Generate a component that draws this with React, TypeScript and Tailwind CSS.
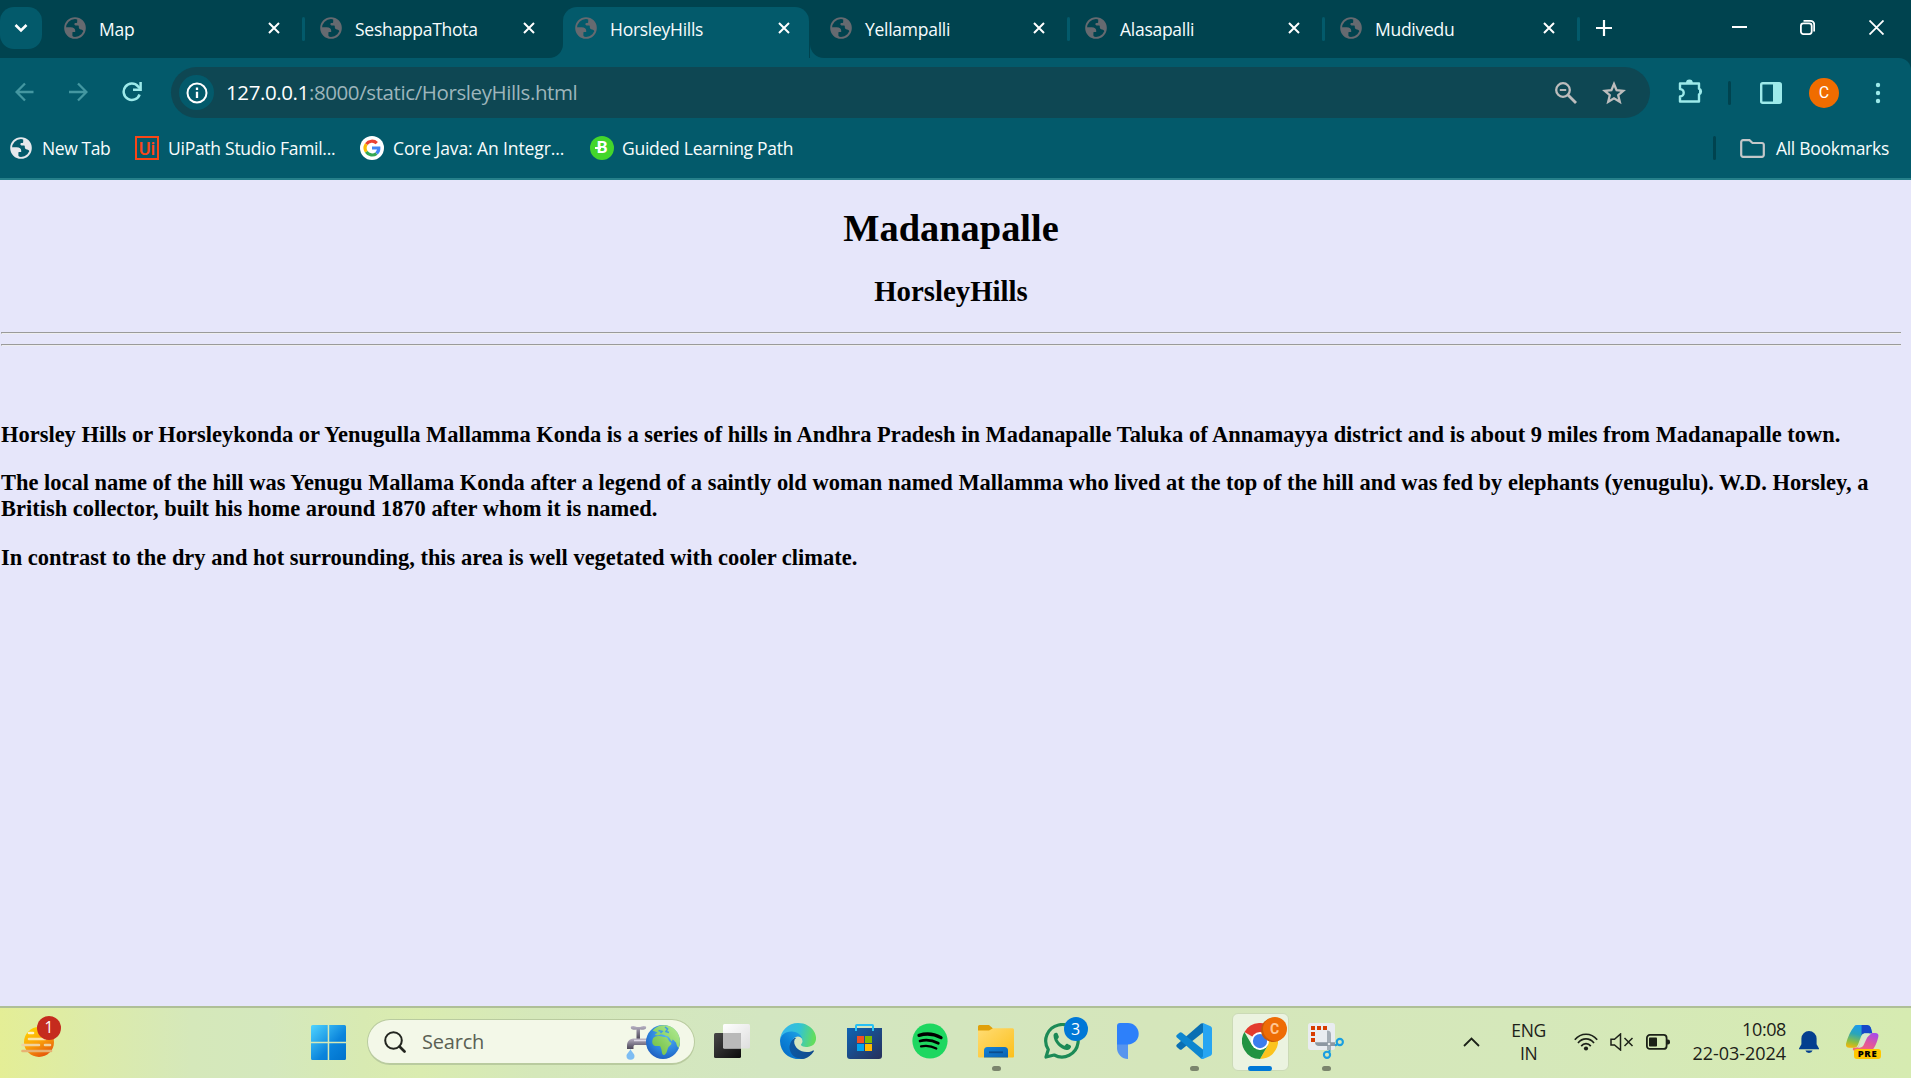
import React from "react";

type IconProps = { className?: string };

const Globe = ({ className = "" }: IconProps) => (
  <svg viewBox="0 0 22 22" className={"size-[22px] shrink-0 " + className}>
    <circle cx="11" cy="11" r="9.9" fill="none" stroke="currentColor" strokeWidth="1.8" />
    <path
      fill="currentColor"
      d="M1.2 10.3H6.6C9.6 10.3 11.2 11.8 11.2 13.6V15H9.2C8.6 15 8.4 15.4 8.4 16V18.2C8.4 19.2 9 19.8 9.8 20.6L7.4 20.2C3.4 18.8 1 15.4 1.2 10.3ZM13.2 1.4C18 2.4 20.9 6.4 20.8 11.2C20.8 12.6 20.4 13.6 19.6 14.6C19.2 13.4 18.4 12.4 17 12.4C15.6 12.4 14.8 11.4 14.8 10.2V9.4C14.8 8.8 14.4 8.4 13.8 8.4H11.6C10.8 8.4 10.4 7.8 10.4 7.2C10.4 6.6 10.8 6 11.6 6H12.2C12.8 6 13.2 5.6 13.2 5Z"
    />
  </svg>
);

const Cross = ({ className = "" }: IconProps) => (
  <svg viewBox="0 0 12 12" className={"shrink-0 " + className}>
    <path d="M1 1l10 10M11 1L1 11" stroke="currentColor" strokeWidth="2" fill="none" />
  </svg>
);

const tabs = [
  { title: "Map", active: false, bar: true },
  { title: "SeshappaThota", active: false, bar: false },
  { title: "HorsleyHills", active: true, bar: false },
  { title: "Yellampalli", active: false, bar: true },
  { title: "Alasapalli", active: false, bar: true },
  { title: "Mudivedu", active: false, bar: true },
];

function Tab({ title, active, bar, first }: { title: string; active: boolean; bar: boolean; first: boolean }) {
  return (
    <div className={"relative flex h-full items-end " + (first ? "w-[256px]" : "w-[255px]")}>
      {active && (
        <>
          <span className="absolute bottom-0 left-[-13px] size-4 bg-[#035a6b]">
            <span className="block size-full rounded-br-[14px] bg-[#00434f]" />
          </span>
          <span className="absolute right-[-11px] bottom-0 size-4 bg-[#035a6b]">
            <span className="block size-full rounded-bl-[14px] bg-[#00434f]" />
          </span>
        </>
      )}
      <div
        className={
          "relative flex h-[51px] items-center pb-[9px] " +
          (active ? "ml-[3px] w-[246px] rounded-t-[14px] bg-[#035a6b] pl-[12px]" : "w-full pl-[15px]")
        }
      >
        <Globe className="text-[#666a70]" />
        <span className="mt-[3px] ml-[13px] flex-1 text-[17.5px] tracking-[-0.27px] text-[#f6fcfd]">{title}</span>
        <Cross className={"size-3 text-white " + (active ? "mr-[19px]" : "mr-[25px]")} />
      </div>
      {bar && <span className="absolute top-[17px] right-0 h-6 w-[3px] rounded-sm bg-[#035a6b]" />}
    </div>
  );
}

function TabStrip() {
  return (
    <div className="flex h-[58px] bg-[#00434f]">
      <div className="mt-[7px] mr-[7px] flex h-[42px] w-[42px] items-center justify-center rounded-[14px] bg-[#035a6b]">
        <svg viewBox="0 0 14 10" className="h-[10px] w-[14px]">
          <path d="M1.5 2L7 7.5L12.500 2" stroke="#fff" strokeWidth="2.6" fill="none" />
        </svg>
      </div>
      {tabs.map((t, i) => (
        <Tab key={t.title} {...t} first={i === 0} />
      ))}
      <svg viewBox="0 0 16 16" className="mt-5 ml-4 size-4">
        <path d="M8 0v16M0 8h16" stroke="#fff" strokeWidth="2.200" />
      </svg>
      <div className="mt-5 ml-auto flex pr-[27px] text-white">
        <svg viewBox="0 0 15 15" className="mr-[53px] size-[15px]">
          <path d="M0 7h15" stroke="currentColor" strokeWidth="2" />
        </svg>
        <svg viewBox="0 0 15 15" className="mr-[54px] size-[15px]" fill="none" stroke="currentColor" strokeWidth="1.8">
          <rect x=".9" y="3.300" width="10.800" height="10.800" rx="2.500" />
          <path d="M3.500 .9h7a3.700 3.700 0 0 1 3.700 3.700v7" />
        </svg>
        <svg viewBox="0 0 15 15" className="size-[15px]">
          <path d="M.5 .5l14 14M14.500 .5l-14 14" stroke="currentColor" strokeWidth="1.800" />
        </svg>
      </div>
    </div>
  );
}

function Toolbar() {
  return (
    <div className="bg-[#00434f]">
      <div className="flex h-[60px] items-center rounded-tr-[12px] bg-[#035a6b] pt-[9px] text-[#9deaea]">
        <div className="flex w-[171px] items-center pb-[1px] pl-[15px]">
          <svg viewBox="0 0 20 20" className="size-5 text-[#4497a1]" fill="none" stroke="currentColor" strokeWidth="2.300">
            <path d="M18.500 10H2M10 1.500L1.600 10L10 18.500" />
          </svg>
          <svg viewBox="0 0 20 20" className="ml-[33px] size-5 text-[#4497a1]" fill="none" stroke="currentColor" strokeWidth="2.300">
            <path d="M1 10h17M10 1.500L18.400 10L10 18.500" />
          </svg>
          <svg viewBox="0 0 20 20" className="ml-[34px] size-5" fill="none" stroke="currentColor" strokeWidth="2.500">
            <path d="M17.600 12.500A8.200 8.200 0 1 1 16 4.300L18 6.500" />
            <path d="M18.600 0v7.800H11" />
          </svg>
        </div>
        <div className="flex h-[51px] w-[1479px] items-center rounded-full bg-[#0e4753] pl-2">
          <div className="flex size-[35px] items-center justify-center rounded-full bg-[#035a6b]">
            <svg viewBox="0 0 22 22" className="size-[22px] text-white" fill="none" stroke="currentColor" strokeWidth="2">
              <circle cx="11" cy="11" r="9.500" />
              <path d="M11 9.800v6.200M11 5.600v2.400" strokeWidth="2.300" />
            </svg>
          </div>
          <span className="ml-[12px] pb-px text-[20.5px] tracking-[-0.4px] text-[#9db5bb]">
            <span className="text-white">127.0.0.1</span>:8000/static/HorsleyHills.html
          </span>
          <svg viewBox="0 0 22 22" className="ml-auto size-[22px]" fill="none" stroke="#bdbdbd">
            <circle cx="8" cy="8" r="6.800" strokeWidth="2.300" />
            <path d="M13 13l8 8" strokeWidth="2.800" />
            <path d="M4.800 8h6.400" strokeWidth="1.900" />
          </svg>
          <svg viewBox="0 0 24 24" className="mr-6 ml-[25px] size-6" fill="none" stroke="#bdbdbd" strokeWidth="2.300">
            <path d="M12 3l2.600 6.200 6.700.6-5.100 4.400 1.600 6.600L12 17.300l-5.800 3.500 1.600-6.600-5.100-4.400 6.700-.6z" />
          </svg>
        </div>
        <svg viewBox="0 0 26 26" className="mb-1 ml-[27px] size-[26px]">
          <path
            d="M3 5.500h19v5.200a3 3 0 0 1 0 5.600v7.200H3v-5a3.400 3.400 0 0 0 0-7.400z"
            fill="none"
            stroke="currentColor"
            strokeWidth="2.400"
            strokeLinejoin="round"
          />
          <path d="M9 5a3.400 3.400 0 0 1 6.800 0zM22 10.200a3.400 3.400 0 0 1 0 6.600z" fill="currentColor" />
        </svg>
        <span className="ml-[25px] h-6 w-[3px] rounded-sm bg-[#00434f]" />
        <svg viewBox="0 0 22 22" className="ml-[29px] size-[22px]">
          <rect x="1.200" y="1.200" width="19.600" height="19.600" rx="1.500" fill="none" stroke="currentColor" strokeWidth="2.400" />
          <rect x="13" y="1" width="8" height="20" fill="currentColor" />
        </svg>
        <span className="ml-[27px] flex size-[30px] items-center justify-center rounded-full bg-[#f06c00] font-[Roboto] text-[16px] text-white">
          C
        </span>
        <svg viewBox="0 0 6 22" className="ml-9 h-[22px] w-[6px]" fill="currentColor">
          <circle cx="3" cy="3" r="2.200" />
          <circle cx="3" cy="11" r="2.200" />
          <circle cx="3" cy="19" r="2.200" />
        </svg>
      </div>
    </div>
  );
}

const GoogleG = () => (
  <svg viewBox="0 0 24 24" className="size-6">
    <circle cx="12" cy="12" r="12" fill="#fff" />
    <g fill="none" strokeWidth="3.200">
      <path d="M6.300 8.200A6.900 6.900 0 0 1 16.800 7.200" stroke="#ea4335" />
      <path d="M6.300 8.200a6.900 6.900 0 0 0 0 7.700" stroke="#fbbc05" />
      <path d="M6.300 15.900a6.900 6.900 0 0 0 10.200 1.500" stroke="#34a853" />
      <path d="M16.500 17.400A6.900 6.900 0 0 0 18.800 12H12" stroke="#4285f4" />
    </g>
  </svg>
);

function Bookmarks() {
  return (
    <div className="flex h-[62px] items-center border-b-2 border-[#26808a] bg-[#035a6b] pl-[10px] text-[17.5px] tracking-[-0.27px] text-[#f8fdfd]">
      <Globe className="text-[#e6e8ec]" />
      <span className="ml-[10px] w-[93px] tracking-[-0.4px] whitespace-nowrap">New Tab</span>
      <span className="flex size-6 items-center justify-center border-2 border-[#fa4616] font-[Roboto] text-[18px] font-medium tracking-normal text-[#fa4616]">
        Ui
      </span>
      <span className="ml-[9px] w-[192px] whitespace-nowrap">UiPath Studio Famil...</span>
      <GoogleG />
      <span className="ml-[9px] w-[197px] tracking-[-0.1px] whitespace-nowrap">Core Java: An Integr...</span>
      <span className="relative flex size-6 items-center justify-center rounded-full bg-[#43d62b] font-[Roboto] text-[17px] font-bold text-white">
        B
        <span className="absolute top-[11px] left-[5px] h-[2px] w-[6px] bg-white" />
      </span>
      <span className="ml-2">Guided Learning Path</span>
      <span className="ml-auto h-6 w-[3px] rounded-sm bg-[#00434f]" />
      <svg viewBox="0 0 25 19" className="ml-6 h-[19px] w-[25px]" fill="none" stroke="#c4c7c9" strokeWidth="2.200">
        <path d="M1.200 3a1.800 1.800 0 0 1 1.800-1.800h6.500L12.500 4H22a1.800 1.800 0 0 1 1.800 1.800v10.200a1.800 1.800 0 0 1-1.800 1.800H3A1.800 1.800 0 0 1 1.200 16z" />
      </svg>
      <span className="mr-[22px] ml-[11px]">All Bookmarks</span>
    </div>
  );
}

const Rule = () => (
  <div className="h-[2px] w-[1900px] border-t border-b border-l border-t-[#9a9a9a] border-b-[#eeeeee] border-l-[#9a9a9a]" />
);

function Page() {
  return (
    <main className="h-[826px] bg-[#e6e6fa] pt-[26px] pl-px font-['Liberation_Serif',serif] font-bold text-black">
      <div className="w-[1900px] text-center">
        <h1 className="text-[38.4px] leading-[44px]">Madanapalle</h1>
        <h2 className="mt-[25px] text-[28.8px] leading-[33px]">HorsleyHills</h2>
      </div>
      <div className="mt-6 space-y-[10px]">
        <Rule />
        <Rule />
      </div>
      <div className="mt-[76px] space-y-[22.46px] text-[22.464px] leading-[26px] whitespace-nowrap">
        <p>
          Horsley Hills or Horsleykonda or Yenugulla Mallamma Konda is a series of hills in Andhra Pradesh in Madanapalle
          Taluka of Annamayya district and is about 9 miles from Madanapalle town.
        </p>
        <p>
          The local name of the hill was Yenugu Mallama Konda after a legend of a saintly old woman named Mallamma who
          lived at the top of the hill and was fed by elephants (yenugulu). W.D. Horsley, a
          <br />
          British collector, built his home around 1870 after whom it is named.
        </p>
        <p>In contrast to the dry and hot surrounding, this area is well vegetated with cooler climate.</p>
      </div>
    </main>
  );
}

const Weather = () => (
  <svg viewBox="0 0 33 32" className="h-8 w-[33px]">
    <defs>
      <linearGradient id="sun" x1="0.200" y1="0" x2="0.700" y2="1">
        <stop offset="0" stopColor="#ffd400" />
        <stop offset=".5" stopColor="#fba30a" />
        <stop offset="1" stopColor="#e4520a" />
      </linearGradient>
    </defs>
    <circle cx="18" cy="16" r="15" fill="url(#sun)" />
    <g strokeLinecap="round" strokeWidth="2.600">
      <path d="M8 7h4" stroke="#fff3c8" />
      <path d="M8 13h16" stroke="#fbe3a6" />
      <path d="M1.500 19H18M24 19h5" stroke="#f0d3a0" />
      <path d="M1.500 25H30" stroke="#e8b273" />
    </g>
  </svg>
);

const StartLogo = () => (
  <svg viewBox="0 0 35 35" className="size-[35px]">
    <defs>
      <linearGradient id="win" x1="0" y1="0" x2="35" y2="35" gradientUnits="userSpaceOnUse">
        <stop offset="0" stopColor="#4fd4ff" />
        <stop offset=".6" stopColor="#0a84dc" />
        <stop offset="1" stopColor="#0072cc" />
      </linearGradient>
    </defs>
    <path
      fill="url(#win)"
      d="M1.500 0H16.700V16.700H0V1.500A1.500 1.500 0 0 1 1.500 0ZM18.200 0H33.500A1.500 1.500 0 0 1 35 1.500V16.700H18.200ZM0 18.200H16.700V35H1.500A1.500 1.500 0 0 1 0 33.500ZM18.200 18.200H35V33.500A1.500 1.500 0 0 1 33.500 35H18.200Z"
    />
  </svg>
);

const FaucetGlobe = () => (
  <svg viewBox="0 0 54 36" className="h-9 w-[54px]">
    <defs>
      <linearGradient id="pipe" x1="0" y1="0" x2="0" y2="1">
        <stop offset="0" stopColor="#b9b3c4" />
        <stop offset=".5" stopColor="#7f7a8c" />
        <stop offset="1" stopColor="#4d4858" />
      </linearGradient>
      <radialGradient id="sea" cx=".6" cy=".3" r=".8">
        <stop offset="0" stopColor="#56b4f5" />
        <stop offset=".6" stopColor="#2b82dc" />
        <stop offset="1" stopColor="#1c55b8" />
      </radialGradient>
      <linearGradient id="land" x1="0" y1="1" x2="1" y2="0">
        <stop offset="0" stopColor="#6dbb3c" />
        <stop offset="1" stopColor="#b4ee98" />
      </linearGradient>
    </defs>
    <path d="M5 2.500C8 1 9 3 12.500 3S17 1 20 2.500C21 5 18 6.500 14 5.500V15H10.500V5.500C7 6.500 4 5 5 2.500Z" fill="url(#pipe)" />
    <path d="M22 14.500H9C3.500 14.500 1 17 1 22V25H7.500V23C7.500 21.500 8 21 9.500 21H22Z" fill="url(#pipe)" />
    <path d="M8 16.500H20" stroke="#ddd8e6" strokeWidth="1.500" />
    <path d="M4.500 25C5.500 28 8.500 29.500 8.500 32A4 3.800 0 0 1 .5 32C.5 29.500 3.500 28 4.500 25Z" fill="#7dbdf3" />
    <circle cx="37" cy="18" r="17" fill="url(#sea)" />
    <path
      d="M26.500 16C27 13.500 29 12.500 31 12.300C33 11.700 34.500 11.700 36 12.600C38 13.500 40.500 12.500 41.500 14C42.500 16 43 17.500 44.500 18.200C46 18.800 45.500 20.500 44 21.500C41.800 23 42 24.500 41.200 26.500C40.300 29.500 39 31.200 37.500 31C35.800 30.500 36 28 35.500 26C35.300 24.500 34.800 23.500 34.200 22.300C32.500 21.500 30 22.500 28 21.500C26 20.200 26 18 26.500 16ZM26.500 6.500C31 1.500 38 0 44 2.300C50 5 54 11 54 17C54 19.500 53.400 22 52.500 24C51 22.500 50.500 20.500 50 18.500C48.500 18 48 15.500 46.500 15.500L45.800 17.500C44.500 16 43.500 13.500 42 12.500L39.500 11.800C38 10.500 36 10.800 34.500 10.500L32 11.500L29 11C29 9.500 31.500 9.500 31.500 8.500Z"
      fill="url(#land)"
    />
    <path d="M32.500 6.500L36 7.500L34.500 9M39 3L41.500 5L40 7.500L43 8.500" stroke="#409be4" strokeWidth="1.600" fill="none" />
  </svg>
);

const TaskView = () => (
  <svg viewBox="0 0 36 34" className="h-[34px] w-9">
    <defs>
      <linearGradient id="tvd" x1="0" y1="0" x2="1" y2="1">
        <stop offset="0" stopColor="#474747" />
        <stop offset="1" stopColor="#0c0c0c" />
      </linearGradient>
      <linearGradient id="tvl" x1="0" y1="0" x2="1" y2="1">
        <stop offset="0" stopColor="#ffffff" />
        <stop offset="1" stopColor="#dedede" />
      </linearGradient>
    </defs>
    <rect x="0" y="9" width="27" height="25" rx="1.500" fill="url(#tvd)" />
    <rect x="9" y="0" width="27" height="24.500" rx="1.500" fill="url(#tvl)" />
    <path d="M9 9H27V24.500H10.500A1.500 1.500 0 0 1 9 23Z" fill="#b9b9b9" />
  </svg>
);

const Edge = () => (
  <svg viewBox="0 0 256 256" className="size-9">
    <defs>
      <linearGradient id="ea" x1="63" x2="241" y1="177" y2="177" gradientUnits="userSpaceOnUse">
        <stop offset="0" stopColor="#0c59a4" />
        <stop offset="1" stopColor="#114a8b" />
      </linearGradient>
      <linearGradient id="eb" x1="157" x2="46" y1="102" y2="223" gradientUnits="userSpaceOnUse">
        <stop offset="0" stopColor="#1b9de2" />
        <stop offset=".5" stopColor="#0d83d8" />
        <stop offset="1" stopColor="#0672cb" />
      </linearGradient>
      <linearGradient id="ec" x1="20" x2="240" y1="60" y2="110" gradientUnits="userSpaceOnUse">
        <stop offset="0" stopColor="#35b8ea" />
        <stop offset=".5" stopColor="#33c3d4" />
        <stop offset="1" stopColor="#62dd5e" />
      </linearGradient>
    </defs>
    <path
      d="M235.700 195.500a93.700 93.700 0 0 1-10.600 4.700 101.900 101.900 0 0 1-35.900 6.400c-47.300 0-88.500-32.500-88.500-74.300a31.500 31.500 0 0 1 16.400-27.300c-42.800 1.800-53.800 46.400-53.800 72.500 0 74 68.100 81.400 82.800 81.400 7.900 0 19.800-2.300 27-4.600l1.300-.4a128.300 128.300 0 0 0 66.600-52.800 4 4 0 0 0-5.300-5.600z"
      fill="url(#ea)"
    />
    <path
      d="M105.700 241.400a79.200 79.200 0 0 1-22.700-21.300 80.700 80.700 0 0 1 29.500-120c3.200-1.500 8.500-4.100 15.600-4a32.400 32.400 0 0 1 25.700 13 31.900 31.900 0 0 1 6.300 18.700c0-.2 24.500-79.600-80-79.600-43.900 0-80 41.700-80 78.200a130.200 130.200 0 0 0 12.100 56 128 128 0 0 0 156.400 67 75.500 75.500 0 0 1-62.800-8z"
      fill="url(#eb)"
    />
    <path
      d="M152.300 148.900c-.9 1-3.400 2.500-3.400 5.600 0 2.600 1.700 5.200 4.800 7.300 14.400 10.100 41.700 8.700 41.800 8.700a59.600 59.600 0 0 0 30.300-8.300 61.400 61.400 0 0 0 30.400-52.900c.3-22.400-8-37.300-11.300-43.900C223.500 23.900 177.700 0 128 0A128 128 0 0 0 0 126.200c.5-36.500 36.800-66 80-66 3.500 0 23.500.3 42 10 16.300 8.600 24.900 18.900 30.800 29.200 6.200 10.700 7.300 24.100 7.300 29.500 0 5.300-2.700 13.300-7.800 20z"
      fill="url(#ec)"
    />
  </svg>
);

const Store = () => (
  <svg viewBox="0 0 35 36" className="h-9 w-[35px]">
    <defs>
      <linearGradient id="st" x1="0" y1="0" x2="1" y2="1">
        <stop offset="0" stopColor="#0f64b4" />
        <stop offset="1" stopColor="#28305a" />
      </linearGradient>
    </defs>
    <path d="M0 5H35V33A3 3 0 0 1 32 36H3A3 3 0 0 1 0 33Z" fill="url(#st)" />
    <path d="M9 8V2.800A.8.8 0 0 1 9.800 2H25.200A.8.800 0 0 1 26 2.800V8" fill="none" stroke="#27c0f5" strokeWidth="2" />
    <path d="M10 13h7v7h-7z" fill="#f25022" />
    <path d="M18 13h7v7h-7z" fill="#7fba00" />
    <path d="M10 21h7v7h-7z" fill="#00a4ef" />
    <path d="M18 21h7v7h-7z" fill="#ffb900" />
  </svg>
);

const Spotify = () => (
  <svg viewBox="0 0 36 36" className="size-9">
    <circle cx="18" cy="18" r="17.600" fill="#1ed760" />
    <g fill="none" stroke="#000" strokeLinecap="round">
      <path d="M7 12.300C14 10.200 22.500 11 29 14.600" strokeWidth="3.300" />
      <path d="M8 18C14 16.400 20.500 17.200 26.300 20.300" strokeWidth="2.700" />
      <path d="M9 23.300C14.500 22.200 19.500 22.800 24.300 25.500" strokeWidth="2.200" />
    </g>
  </svg>
);

const Explorer = () => (
  <svg viewBox="0 0 36 33" className="h-[33px] w-9">
    <defs>
      <linearGradient id="fo" x1="0" y1="0" x2="1" y2="1">
        <stop offset="0" stopColor="#ffdc74" />
        <stop offset="1" stopColor="#fcc01c" />
      </linearGradient>
      <linearGradient id="fb" x1="0" y1="0" x2="1" y2="1">
        <stop offset="0" stopColor="#1583d8" />
        <stop offset="1" stopColor="#0b61b0" />
      </linearGradient>
    </defs>
    <path d="M0 1.500A1.500 1.500 0 0 1 1.500 0H11L15 3.500L12 7H0Z" fill="#e0a00a" />
    <path d="M0 5.500H11L15 3.200H34.500A1.500 1.500 0 0 1 36 4.700V31.500A1 1 0 0 1 35 32.500H1A1 1 0 0 1 0 31.500Z" fill="url(#fo)" />
    <path d="M6 32.500V25.500A3.500 3.500 0 0 1 9.500 22H26.500A3.500 3.500 0 0 1 30 25.500V32.500Z" fill="url(#fb)" />
    <path d="M11 27.300H25" stroke="#0a4c8e" strokeWidth="1.800" />
  </svg>
);

const WhatsApp = () => (
  <svg viewBox="0 0 36 36" className="size-9">
    <path
      d="M2 34L4.300 26.500A16.200 16.200 0 1 1 10.200 32Z"
      fill="none"
      stroke="#1c8a56"
      strokeWidth="3.200"
      strokeLinejoin="round"
    />
    <path
      d="M9.500 12.500C9.500 10.800 11 9.500 12.500 9.800C13.600 10 13.800 11 14.800 13.600C15.200 14.800 13.300 16 13.500 16.600C15 19.600 17.200 21.500 20.200 22.700C21 22.900 22 20.600 22.900 20.700C23.600 20.800 27 22.500 27 22.900C27.200 25.500 24.800 27 22.500 26.900C17 26.600 9.500 19.500 9.500 12.500Z"
      fill="#1c8a56"
    />
  </svg>
);

const BlueP = () => (
  <svg viewBox="0 0 22 36" className="h-9 w-[22px]">
    <path d="M0 21H11V36A11 11 0 0 1 0 25Z" fill="#5795ee" />
    <path d="M3 0H11A10.700 10.700 0 0 1 11 21.400H0V3A3 3 0 0 1 3 0Z" fill="#2d80fa" />
  </svg>
);

const VsCode = () => (
  <svg viewBox="0 0 36 36" className="size-9">
    <path d="M27 .2V9.500L6 26.300Q4.700 27.300 3.400 26.300L.8 24Q-.3 22.700 .9 21.500L25 .6Z" fill="#0a6fb3" />
    <path d="M27 35.800V26.500L6 9.700Q4.700 8.700 3.400 9.700L.8 12Q-.3 13.300 .9 14.500L25 35.400Z" fill="#0d86d0" />
    <path d="M27 0L34.600 3.200Q36 3.900 36 5.400V30.600Q36 32.100 34.600 32.800L27 36L24.500 35Q26.800 35.300 27 33Z" fill="#27a5f2" />
    <path d="M27 0V34L25 35.200L27 36L28 34V2Z" fill="#27a5f2" />
  </svg>
);

const Chrome = () => (
  <svg viewBox="0 0 48 48" className="size-9">
    <path d="M24 24L3.200 12A24 24 0 0 1 44.800 12Z" fill="#e33b2e" />
    <path d="M24 12H44.800A24 24 0 0 1 24 48L34.400 30Z" fill="#fcc31e" />
    <path d="M34.400 30L24 48A24 24 0 0 1 3.200 12L13.600 30L24 36Z" fill="#229342" />
    <path d="M24 12H44.800L34 31L24 24Z" fill="#fcc31e" />
    <circle cx="24" cy="24" r="12" fill="#fff" />
    <circle cx="24" cy="24" r="9.500" fill="#3b7ded" />
  </svg>
);

const Snip = () => (
  <svg viewBox="0 0 36 36" className="size-9">
    <rect x="0" y="0" width="27" height="27" rx="2.500" fill="#e9ecf1" />
    <path d="M3 3h4v4H3zM9 3h4v4H9zM15 3h4v4h-4zM3 9h4v4H3zM3 15h4v4H3z" fill="#d83b01" />
    <path d="M19 7.500A4 4 0 0 1 23 11.500V27H19Z" fill="#a4adb6" />
    <path d="M7 19.200H27V23H11A4 4 0 0 1 7 19.200Z" fill="#8d97a2" />
    <circle cx="21" cy="21" r="1.300" fill="#e6eaee" />
    <circle cx="31.800" cy="19" r="3.100" fill="none" stroke="#1a9fe0" strokeWidth="2.100" />
    <path d="M27 22.500l2-1" stroke="#1a9fe0" strokeWidth="2" />
    <circle cx="19" cy="31.800" r="3.100" fill="none" stroke="#1a9fe0" strokeWidth="2.100" />
    <path d="M21.500 29V27" stroke="#1a9fe0" strokeWidth="2" />
  </svg>
);

type AppSlotProps = { children: React.ReactNode; badge?: React.ReactNode; mark?: boolean; active?: boolean };

function AppSlot({ children, badge, mark, active }: AppSlotProps) {
  return (
    <div className="flex h-[68px] w-[66px] items-center justify-center">
      <div
        className={
          "relative flex h-[58px] w-[57px] items-center justify-center pb-[2px] " +
          (active ? "rounded-md border border-[#cbdab6] bg-[#ebf3e0]" : "border border-transparent")
        }
      >
        {children}
        {badge}
        {mark && <span className="absolute bottom-[-1px] h-[5px] w-[9px] rounded-full bg-[#7b856d]" />}
        {active && <span className="absolute bottom-[-1px] h-[5px] w-6 rounded-full bg-[#0078d7]" />}
      </div>
    </div>
  );
}

const Tray = () => (
  <div className="ml-auto flex h-[68px] items-center text-[18px] text-[#1c2118]">
    <svg viewBox="0 0 17 10" className="h-[10px] w-[17px]">
      <path d="M1 9L8.500 1.500L16 9" fill="none" stroke="currentColor" strokeWidth="1.800" />
    </svg>
    <div className="ml-[31px] w-[36px] text-center text-[17.5px] leading-[23px] tracking-[-0.4px]">
      ENG
      <br />
      IN
    </div>
    <svg viewBox="0 0 24 18" className="ml-[27px] h-[18px] w-6" fill="none" stroke="currentColor" strokeWidth="1.700">
      <path d="M.8 6.800C7-.6 17-.6 23.200 6.800M4 10C8.500 4.600 15.500 4.600 20 10M7.200 13.100C9.800 9.900 14.200 9.900 16.800 13.100" />
      <circle cx="12" cy="15.500" r="2.100" fill="currentColor" stroke="none" />
    </svg>
    <svg viewBox="0 0 24 18" className="ml-3 h-[18px] w-6" fill="none" stroke="currentColor" strokeWidth="1.500">
      <path d="M1 6.200H4.500L10.500 1V17L4.500 12H1ZM14.500 5L22.500 13M22.500 5L14.500 13" />
    </svg>
    <svg viewBox="0 0 24 16" className="ml-3 h-4 w-6">
      <rect x=".9" y=".9" width="19.700" height="14" rx="3" fill="none" stroke="currentColor" strokeWidth="1.800" />
      <rect x="3" y="3.500" width="8" height="9" rx=".8" fill="currentColor" />
      <path d="M21 5.500h1a2 2 0 0 1 2 2v1a2 2 0 0 1-2 2h-1z" fill="currentColor" />
    </svg>
    <div className="ml-[23px] pb-[2px] text-right leading-[24px]">
      <div className="tracking-[-0.4px]">10:08</div>
      <div className="tracking-[-0.05px]">22-03-2024</div>
    </div>
    <svg viewBox="0 0 20 23" className="ml-[13px] h-[23px] w-5" fill="#043f8f">
      <path d="M10 0a7.600 7.600 0 0 1 7.600 7.600v5.600L20 17.400a.6.600 0 0 1-.5.900H.5a.6.600 0 0 1-.5-.900l2.400-4.200V7.600A7.600 7.600 0 0 1 10 0zM6.400 19.600h7.200a3.700 3.200 0 0 1-7.200 0z" />
    </svg>
    <div className="relative mr-[30px] ml-[26px] h-[34px] w-[36px]">
      <svg viewBox="0 0 36 28" className="h-[26px] w-[35px]">
        <defs>
          <linearGradient id="ca" x1=".5" y1="0" x2=".2" y2="1">
            <stop offset="0" stopColor="#1b9af0" />
            <stop offset=".4" stopColor="#2aa6b8" />
            <stop offset=".75" stopColor="#8fbf3f" />
            <stop offset="1" stopColor="#f2b70c" />
          </linearGradient>
          <linearGradient id="cb" x1=".8" y1="0" x2=".2" y2="1">
            <stop offset="0" stopColor="#a64bea" />
            <stop offset=".5" stopColor="#e0559e" />
            <stop offset="1" stopColor="#fb6a6a" />
          </linearGradient>
        </defs>
        <path d="M9 1.500Q9.800 0 12 0H23Q26 0 27 3L28.500 9H20Q17.500 9 16.500 12L13 21.500Q12 24.500 9 24.500H4Q-.6 24.500 .3 20Q3 9 9 1.500Z" fill="url(#ca)" />
        <path d="M17 0H23Q26 0 27 3L28.500 9H20Q18 9 17 11Z" fill="#1647c8" />
        <path d="M28 8.500H31.500Q36 8.500 35 13Q33 22 28 28H10Q6.500 27.500 8 24.500H10Q14 24.500 15 21Z" fill="url(#cb)" />
        <path d="M20 9.200H25L19 22Q17.500 24.700 12 24.500Q14 24 15 21L17.500 12.500Q18.200 9.500 20 9.200Z" fill="#d9e8cf" />
      </svg>
      <span className="absolute right-0 bottom-0 flex h-[10px] w-[27px] items-center justify-center rounded-[3px] bg-[#ffc800] font-['Open_Sans',sans-serif] text-[9.5px] leading-none font-extrabold tracking-[0.6px] text-black">
        PRE
      </span>
    </div>
  </div>
);

function Taskbar() {
  return (
    <footer className="flex h-[72px] items-start border-t-2 border-[#afbf97] bg-[linear-gradient(90deg,#e4ee96_0%,#dcebaa_5%,#d5e8ba_10%,#d4e8bd_14%,#d8eab2_19%,#daecb0_22%,#d5e8ba_28%,#d3e6c1_40%,#d5e6bb_60%,#d5e8ba_80%,#d6ebb1_100%)]">
      <div className="relative mt-[18px] ml-[21px] w-[290px]">
        <Weather />
        <span className="absolute top-[-10px] left-4 flex size-6 items-center justify-center rounded-full bg-[#c52b1e] text-[15.5px] text-white">
          1
        </span>
      </div>
      <div className="mt-[17px]">
        <StartLogo />
      </div>
      <div className="mt-[11px] ml-[21px] flex h-[46px] w-[328px] items-center rounded-full border border-b-2 border-[#b9cb9f] bg-[#f3f8e8] pl-4">
        <svg viewBox="0 0 22 22" className="size-[22px]" fill="none" stroke="#22251f" strokeLinecap="round">
          <circle cx="9.500" cy="9.500" r="8.300" strokeWidth="2" />
          <path d="M15.500 15.500L20.500 20.500" strokeWidth="2.700" />
        </svg>
        <span className="ml-4 flex-1 text-[20px] tracking-[-0.2px] text-[#5a6154]">Search</span>
        <span className="mr-[14px]">
          <FaucetGlobe />
        </span>
      </div>
      <div className="ml-[4px] flex">
        <AppSlot>
          <TaskView />
        </AppSlot>
        <AppSlot>
          <Edge />
        </AppSlot>
        <AppSlot>
          <Store />
        </AppSlot>
        <AppSlot>
          <Spotify />
        </AppSlot>
        <AppSlot mark>
          <Explorer />
        </AppSlot>
        <AppSlot
          badge={
            <span className="absolute top-[3px] right-[2px] flex size-6 items-center justify-center rounded-full bg-[#0078d7] text-[16px] text-white">
              3
            </span>
          }
        >
          <WhatsApp />
        </AppSlot>
        <AppSlot>
          <BlueP />
        </AppSlot>
        <AppSlot mark>
          <VsCode />
        </AppSlot>
        <AppSlot
          active
          badge={
            <>
              <span className="absolute top-[4px] right-[3px] size-6 rounded-full bg-[#c9590a]" />
              <span className="absolute top-[3px] right-[1px] flex size-6 items-center justify-center rounded-full bg-[#ee6c05] font-[Roboto] text-[14px] font-bold text-[#ffc795]">
                C
              </span>
            </>
          }
        >
          <Chrome />
        </AppSlot>
        <AppSlot mark>
          <Snip />
        </AppSlot>
      </div>
      <Tray />
    </footer>
  );
}

export default function App() {
  return (
    <div className="flex h-[1078px] w-[1911px] flex-col overflow-hidden font-['Open_Sans',sans-serif]">
      <TabStrip />
      <Toolbar />
      <Bookmarks />
      <Page />
      <Taskbar />
    </div>
  );
}
